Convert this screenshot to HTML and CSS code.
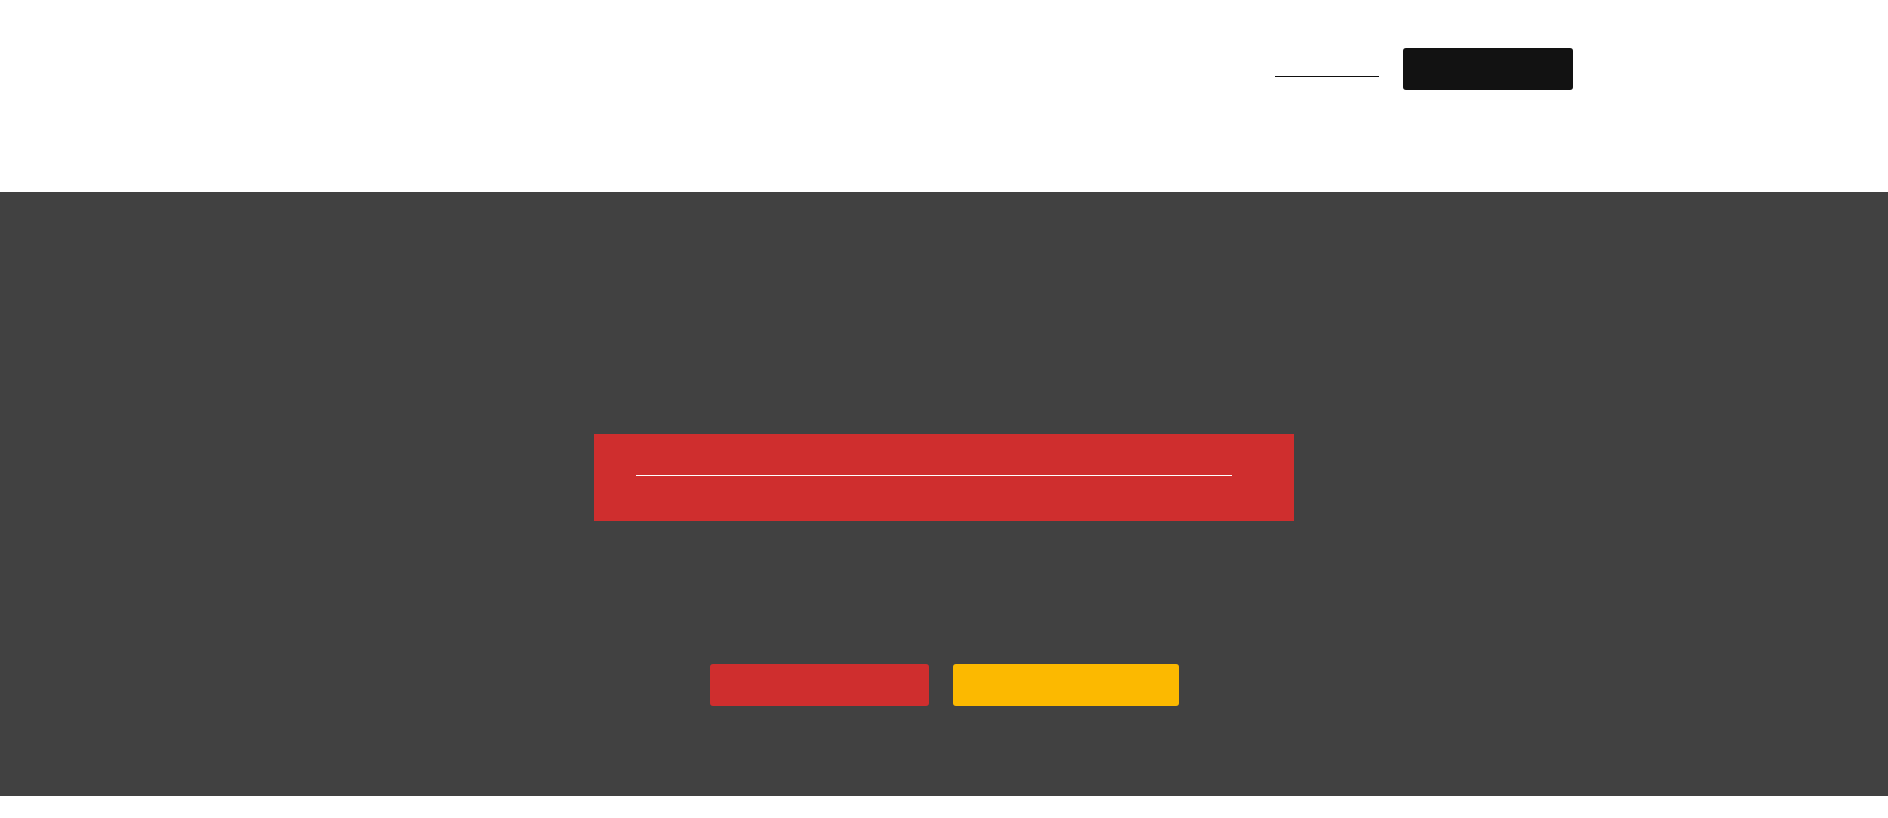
FILE: index.html
```html
<!DOCTYPE html>
<html lang="en">
<head>
<meta charset="utf-8">
<title>Page</title>
<link rel="stylesheet" href="styles.css">
</head>
<body>
<header class="site-header">
  <nav class="nav">
    <a class="nav-link" href="#" aria-label="Link"></a>
    <a class="nav-button" href="#" aria-label="Button"></a>
  </nav>
</header>
<main class="hero">
  <div class="banner">
    <a class="banner-link" href="#" aria-label="Banner link"></a>
  </div>
  <div class="actions">
    <a class="btn btn-red" href="#" aria-label="Primary"></a>
    <a class="btn btn-amber" href="#" aria-label="Secondary"></a>
  </div>
</main>
<footer class="site-footer"></footer>
</body>
</html>
```
FILE: styles.css
```css
html, body {
  margin: 0;
  padding: 0;
  background: #ffffff;
  font-family: "Liberation Sans", Arial, sans-serif;
}

.site-header {
  height: 192px;
  box-sizing: border-box;
  padding-top: 48px;
}

.nav {
  width: 1258px;
  margin: 0 auto;
  display: flex;
  justify-content: flex-end;
  align-items: flex-start;
  gap: 24px;
}

.nav-link {
  display: block;
  width: 104px;
  height: 29px;
  box-sizing: border-box;
  border-bottom: 1px solid #111111;
}

.nav-button {
  display: block;
  width: 170px;
  height: 42px;
  background: #121212;
  border-radius: 3px;
}

.hero {
  background: #414141;
  height: 604px;
  box-sizing: border-box;
  padding-top: 242px;
  display: flex;
  flex-direction: column;
  align-items: center;
}

.banner {
  width: 700px;
  height: 87px;
  box-sizing: border-box;
  background: #cf2e2e;
  padding: 41px 62px 0 42px;
}

.banner-link {
  display: block;
  width: 596px;
  height: 1px;
  background: #ffffff;
}

.actions {
  margin-top: 143px;
  display: flex;
  gap: 24px;
}

.btn {
  display: block;
  height: 42px;
  border-radius: 3px;
}

.btn-red {
  width: 219px;
  background: #cf2e2e;
}

.btn-amber {
  width: 226px;
  background: #fcb900;
}

.site-footer {
  height: 22px;
}
```
